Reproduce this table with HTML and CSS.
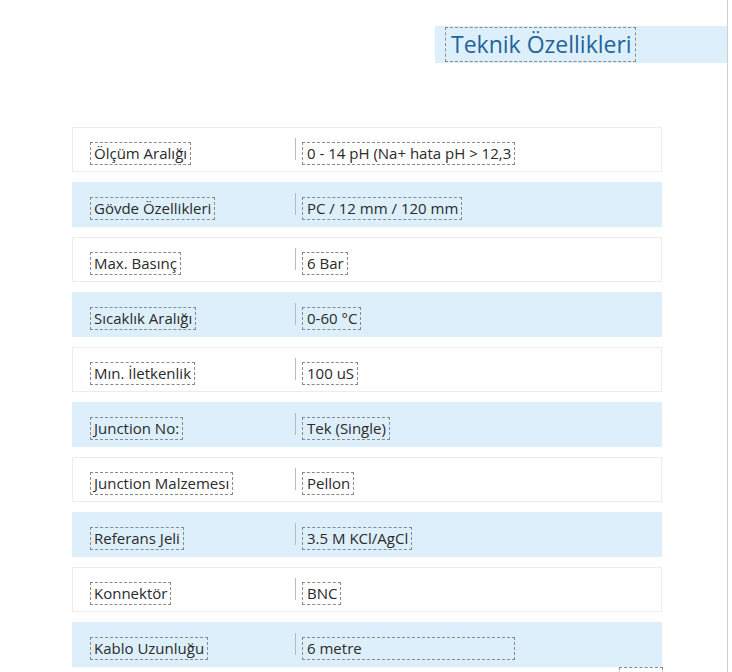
FILE: index.html
```html
<!DOCTYPE html>
<html lang="tr">
<head>
<meta charset="utf-8">
<link rel="stylesheet" href="styles.css">
</head>
<body>
<div class="page">
  <div class="title-band"><h2 class="title"><span class="dash">Teknik Özellikleri</span></h2></div>
  <div class="table">
    <div class="row"><div class="label"><span class="dash">Ölçüm Aralığı</span></div><div class="sep"></div><div class="value"><span class="dash">0 - 14 pH (Na+ hata pH &gt; 12,3</span></div></div>
    <div class="row alt"><div class="label"><span class="dash">Gövde Özellikleri</span></div><div class="sep"></div><div class="value"><span class="dash">PC / 12 mm / 120 mm</span></div></div>
    <div class="row"><div class="label"><span class="dash">Max. Basınç</span></div><div class="sep"></div><div class="value"><span class="dash">6 Bar</span></div></div>
    <div class="row alt"><div class="label"><span class="dash">Sıcaklık Aralığı</span></div><div class="sep"></div><div class="value"><span class="dash">0-60 °C</span></div></div>
    <div class="row"><div class="label"><span class="dash">Mın. İletkenlik</span></div><div class="sep"></div><div class="value"><span class="dash">100 uS</span></div></div>
    <div class="row alt"><div class="label"><span class="dash">Junction No:</span></div><div class="sep"></div><div class="value"><span class="dash">Tek (Single)</span></div></div>
    <div class="row"><div class="label"><span class="dash">Junction Malzemesı</span></div><div class="sep"></div><div class="value"><span class="dash">Pellon</span></div></div>
    <div class="row alt"><div class="label"><span class="dash">Referans Jeli</span></div><div class="sep"></div><div class="value"><span class="dash">3.5 M KCl/AgCl</span></div></div>
    <div class="row"><div class="label"><span class="dash">Konnektör</span></div><div class="sep"></div><div class="value"><span class="dash">BNC</span></div></div>
    <div class="row alt"><div class="label"><span class="dash">Kablo Uzunluğu</span></div><div class="sep"></div><div class="value"><span class="dash wide">6 metre</span></div></div>
  </div>
  <div class="tail"><span class="dash tailbox"></span></div>
</div>
</body>
</html>
```
FILE: styles.css
```css
html, body { margin: 0; padding: 0; background: #fff; }
body { font-family: "Open Sans", "Noto Sans", sans-serif; color: #2a2a2a; overflow: hidden; }
.page {
  width: 727px;
  height: 672px;
  border-right: 1px solid #cfcfcf;
  padding-top: 26px;
  box-sizing: content-box;
}
.title-band {
  margin-left: 435px;
  background: #ddeffb;
  height: 37px;
  display: flex;
  align-items: center;
  padding-left: 11px;
}
.title {
  margin: 0;
  font-weight: 400;
  font-size: 23px;
  line-height: 33px;
  color: #23649a;
}
.dash { outline: 1px dashed #8a8a8a; outline-offset: 0; }
.title .dash { padding: 0 3px 0 5px; display: inline-block; }
.table {
  margin: 64px 0 0 72px;
  width: 590px;
  display: flex;
  flex-direction: column;
  gap: 10px;
}
.row {
  height: 45px;
  box-sizing: border-box;
  border: 1px solid #ececec;
  background: #fff;
  display: flex;
  align-items: center;
  font-size: 15px;
}
.row.alt { background: #ddeffb; border-color: #ddeffb; }
.label { width: 204px; padding-left: 18px; padding-top: 8px; }
.label .dash, .value .dash { display: inline-block; padding: 0 3px; line-height: 21px; }
.sep { width: 1px; height: 22px; background: #b9b9b9; margin-top: -2px; }
.value { padding-left: 7px; padding-top: 8px; }
.value .dash { padding-left: 4px; }
.value .dash.wide { width: 204px; }
.tail { margin-left: 620px; margin-top: 1px; }
.tailbox { display: block; width: 42px; height: 10px; }
```
